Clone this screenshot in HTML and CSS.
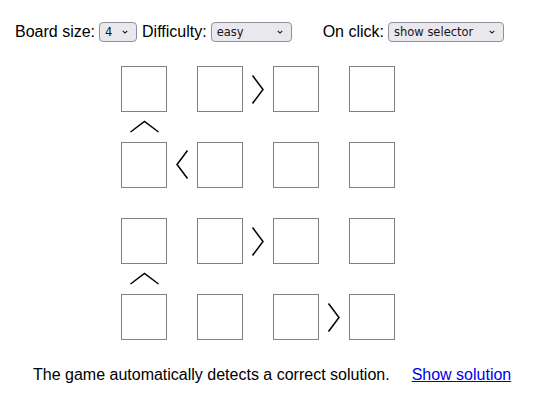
FILE: index.html
```html
<!DOCTYPE html>
<html>
<head>
<title>Unequal</title>
    <link rel="stylesheet" href="styles.css">
</head>
<body>
<div class="game">

  <div class="controls">
    <label>Board size:
      <span class="picker size">
        <select id="size">
          <option>4</option>
          <option>5</option>
          <option>6</option>
        </select>
        <svg class="chevron" viewBox="0 0 8 5"><polyline points="1,1 4,4 7,1"/></svg>
      </span>
    </label>
    <label>Difficulty:
      <span class="picker difficulty">
        <select id="difficulty">
          <option>easy</option>
          <option>medium</option>
          <option>hard</option>
        </select>
        <svg class="chevron" viewBox="0 0 8 5"><polyline points="1,1 4,4 7,1"/></svg>
      </span>
    </label>
    <label class="onclick">On click:
      <span class="picker mode">
        <select id="onclick">
          <option>show selector</option>
          <option>cycle numbers</option>
        </select>
        <svg class="chevron" viewBox="0 0 8 5"><polyline points="1,1 4,4 7,1"/></svg>
      </span>
    </label>
  </div>

  <div class="board">
    <!-- row 1 -->
    <div class="cell"></div>
    <div class="gap"></div>
    <div class="cell"></div>
    <div class="gap"><svg viewBox="0 0 30 46"><polyline points="9.5,9.5 20,23.5 9.5,37.5"/></svg></div>
    <div class="cell"></div>
    <div class="gap"></div>
    <div class="cell"></div>

    <div class="gap"><svg viewBox="0 0 46 30"><polyline points="9.5,20 23.5,9.5 37.5,20"/></svg></div>
    <div class="gap"></div>
    <div class="gap"></div>
    <div class="gap"></div>
    <div class="gap"></div>
    <div class="gap"></div>
    <div class="gap"></div>

    <!-- row 2 -->
    <div class="cell"></div>
    <div class="gap"><svg viewBox="0 0 30 46"><polyline points="20.5,8.5 10,22.5 20.5,36.5"/></svg></div>
    <div class="cell"></div>
    <div class="gap"></div>
    <div class="cell"></div>
    <div class="gap"></div>
    <div class="cell"></div>

    <div class="gap"></div>
    <div class="gap"></div>
    <div class="gap"></div>
    <div class="gap"></div>
    <div class="gap"></div>
    <div class="gap"></div>
    <div class="gap"></div>

    <!-- row 3 -->
    <div class="cell"></div>
    <div class="gap"></div>
    <div class="cell"></div>
    <div class="gap"><svg viewBox="0 0 30 46"><polyline points="9.5,9.5 20,23.5 9.5,37.5"/></svg></div>
    <div class="cell"></div>
    <div class="gap"></div>
    <div class="cell"></div>

    <div class="gap"><svg viewBox="0 0 46 30"><polyline points="9.5,20 23.5,9.5 37.5,20"/></svg></div>
    <div class="gap"></div>
    <div class="gap"></div>
    <div class="gap"></div>
    <div class="gap"></div>
    <div class="gap"></div>
    <div class="gap"></div>

    <!-- row 4 -->
    <div class="cell"></div>
    <div class="gap"></div>
    <div class="cell"></div>
    <div class="gap"></div>
    <div class="cell"></div>
    <div class="gap"><svg viewBox="0 0 30 46"><polyline points="9.5,9.5 20,23.5 9.5,37.5"/></svg></div>
    <div class="cell"></div>
  </div>

  <div class="footer">
    <span>The game automatically detects a correct solution.</span>
    <a href="#">Show solution</a>
  </div>

</div>
</body>
</html>
```

FILE: styles.css
```css
body {
    margin: 0;
    background-color: white;
    font-family: "Liberation Sans", Arial, sans-serif;
    font-size: 16px;
    color: black;
}

.game {
    padding: 22px 0 0 15px;
}

.controls {
    display: flex;
    align-items: center;
    gap: 5px;
    height: 20px;
}

.controls label {
    display: inline-flex;
    align-items: center;
    gap: 4px;
}

.controls .onclick {
    margin-left: 26px;
}

.picker {
    position: relative;
    display: inline-block;
}

.picker select {
    appearance: none;
    -webkit-appearance: none;
    display: block;
    box-sizing: border-box;
    height: 20px;
    margin: 0;
    padding: 0 0 0 5px;
    border: 1px solid #8f8f9d;
    border-radius: 4px;
    background-color: #e9e9ed;
    color: #15141a;
    font-family: "DejaVu Sans", sans-serif;
    font-size: 11.5px;
    line-height: 18px;
}

.size select {
    width: 38px;
}

.difficulty select {
    width: 81px;
}

.mode select {
    width: 116px;
}

.chevron {
    position: absolute;
    right: 9px;
    top: 8px;
    width: 6px;
    height: 4px;
    pointer-events: none;
}

.chevron polyline {
    fill: none;
    stroke: #15141a;
    stroke-width: 1.4;
}

.board {
    display: grid;
    grid-template-columns: 46px 30px 46px 30px 46px 30px 46px;
    grid-template-rows: 46px 30px 46px 30px 46px 30px 46px;
    margin: 24px 0 0 106px;
    width: max-content;
}

.cell {
    border: 1px solid gray;
}

.gap svg {
    display: block;
    width: 100%;
    height: 100%;
}

.gap polyline {
    fill: none;
    stroke: black;
    stroke-width: 1.5;
}

.footer {
    display: flex;
    margin: 26px 0 0 18px;
}

.footer a {
    color: #0000ee;
    margin-left: 22px;
}
```
